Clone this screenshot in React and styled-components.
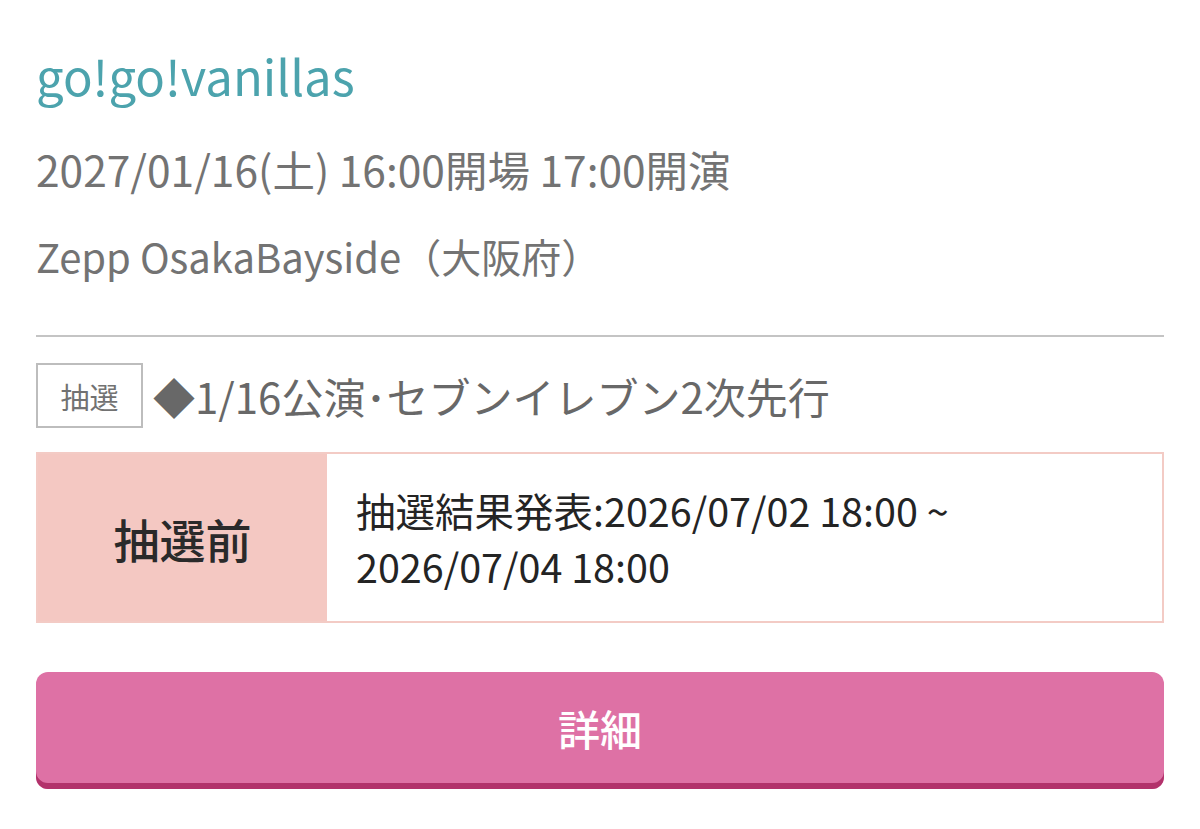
import React from "react";
import styled, { createGlobalStyle } from "styled-components";

const Global = createGlobalStyle`
  html, body { margin: 0; padding: 0; background: #ffffff; }
  body { font-family: "Noto Sans CJK JP", "Noto Sans", sans-serif; }
`;

const Page = styled.div`
  width: 1200px;
  box-sizing: border-box;
  padding: 45px 36px 40px;
`;

const Artist = styled.h1`
  margin: 0;
  font-size: 49px;
  font-weight: 400;
  line-height: 60px;
  color: #4ca3ad;
`;

const InfoLine = styled.p`
  margin: ${(p) => p.$top}px 0 0;
  font-size: ${(p) => p.$size}px;
  line-height: 60px;
  color: #737373;
`;

const Divider = styled.hr`
  margin: 49px 0 0;
  border: none;
  height: 2px;
  background: #c4c4c4;
`;

const TicketRow = styled.div`
  display: flex;
  align-items: center;
  gap: 10px;
  margin-top: 26px;
`;

const Tag = styled.span`
  display: inline-flex;
  align-items: center;
  justify-content: center;
  box-sizing: border-box;
  width: 107px;
  height: 65px;
  border: 2px solid #bdbdbd;
  font-size: 29px;
  color: #727272;
`;

const TicketName = styled.span`
  font-size: 42px;
  color: #686868;
  line-height: 1;
`;

const Status = styled.div`
  display: grid;
  grid-template-columns: 289px 1fr;
  margin-top: 24px;
  height: 171px;
  border: 2px solid #f3cbc5;
  box-sizing: border-box;
`;

const StatusLabel = styled.div`
  display: flex;
  align-items: center;
  justify-content: center;
  background: #f4c8c2;
  font-size: 46px;
  font-weight: 500;
  color: #2a2a2a;
`;

const StatusText = styled.div`
  display: flex;
  align-items: center;
  padding: 0 29px;
  font-size: 39.5px;
  line-height: 56px;
  color: #242424;
`;

const DetailButton = styled.button`
  display: block;
  width: 100%;
  margin-top: 49px;
  height: 117px;
  border: none;
  border-radius: 12px;
  background: #de71a5;
  box-shadow: inset 0 -6px 0 #b2326b;
  padding: 0 0 6px;
  font-family: inherit;
  font-size: 42px;
  font-weight: 500;
  color: #ffffff;
  cursor: pointer;
`;

export default function App() {
  return (
    <>
      <Global />
      <Page>
        <Artist>go!go!vanillas</Artist>
        <InfoLine $top={34} $size={42.5}>
          2027/01/16(土) 16:00開場 17:00開演
        </InfoLine>
        <InfoLine $top={27} $size={40}>
          Zepp OsakaBayside（大阪府）
        </InfoLine>
        <Divider />
        <TicketRow>
          <Tag>抽選</Tag>
          <TicketName>◆1/16公演･セブンイレブン2次先行</TicketName>
        </TicketRow>
        <Status>
          <StatusLabel>抽選前</StatusLabel>
          <StatusText>
            抽選結果発表:2026/07/02 18:00 ~
            <br />
            2026/07/04 18:00
          </StatusText>
        </Status>
        <DetailButton>詳細</DetailButton>
      </Page>
    </>
  );
}
